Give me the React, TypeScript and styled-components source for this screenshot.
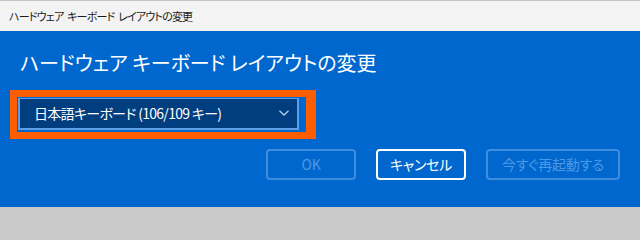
import React from "react";
import styled, { createGlobalStyle } from "styled-components";

const Global = createGlobalStyle`
  html, body {
    margin: 0;
    padding: 0;
    width: 640px;
    height: 210px;
    overflow: hidden;
    background: #c9c9c9;
  }
  body {
    font-family: "Noto Sans CJK JP", "Noto Sans", sans-serif;
    font-feature-settings: "palt";
  }
`;

const Window = styled.div`
  display: flex;
  flex-direction: column;
  width: 640px;
  height: 207px;
`;

const TitleBar = styled.div`
  display: flex;
  align-items: center;
  height: 30px;
  border-top: 1px solid #c4c4c4;
  background: #f3f3f3;
  padding-left: 9px;
  font-size: 11px;
  letter-spacing: -0.8px;
  word-spacing: 2px;
  color: #1b1b1b;
`;

const Content = styled.div`
  flex: 1;
  display: flex;
  flex-direction: column;
  background: #0067cf;
  padding: 18px 20px 0 10px;
`;

const Heading = styled.h1`
  margin: 0 0 0 10px;
  font-size: 20px;
  line-height: 28px;
  font-weight: 400;
  color: #ffffff;
`;

const FocusFrame = styled.div`
  align-self: flex-start;
  margin-top: 13px;
  border-style: solid;
  border-color: #ff5e00;
  border-width: 7px 10px 7px 7px;
  padding: 1px 7px 2px 1px;
`;

const Select = styled.div`
  display: flex;
  align-items: center;
  justify-content: space-between;
  box-sizing: border-box;
  width: 281px;
  height: 32px;
  background: #003e80;
  border-style: solid;
  border-color: #5c9fe6;
  border-width: 1px 2px 2px 2px;
  padding: 0 7px 1px 14px;
  font-size: 14px;
  letter-spacing: -0.7px;
  color: #ffffff;
`;

const Buttons = styled.div`
  display: flex;
  justify-content: flex-end;
  gap: 20px;
  margin-top: 10px;
`;

const Button = styled.div<{ $w: number; $enabled?: boolean }>`
  display: flex;
  align-items: center;
  justify-content: center;
  box-sizing: border-box;
  width: ${(p) => p.$w}px;
  height: 31px;
  border-radius: 4px;
  border: ${(p) => (p.$enabled ? "2px solid #ffffff" : "2px solid #3f8ddf")};
  color: ${(p) => (p.$enabled ? "#ffffff" : "#4e98e4")};
  font-size: 14px;
  letter-spacing: -0.3px;
  padding-bottom: 1px;
`;

const Chevron = () => (
  <svg width="12" height="8" viewBox="0 0 12 8">
    <path d="M1.5 1.8 L6 6 L10.5 1.8" fill="none" stroke="#b8cde6" strokeWidth="1.3" />
  </svg>
);

export default function App() {
  return (
    <>
      <Global />
      <Window>
        <TitleBar>ハードウェア キーボード レイアウトの変更</TitleBar>
        <Content>
          <Heading>ハードウェア キーボード レイアウトの変更</Heading>
          <FocusFrame>
            <Select>
              <span>日本語キーボード (106/109 キー)</span>
              <Chevron />
            </Select>
          </FocusFrame>
          <Buttons>
            <Button $w={90}>OK</Button>
            <Button $w={90} $enabled>
              キャンセル
            </Button>
            <Button $w={134}>今すぐ再起動する</Button>
          </Buttons>
        </Content>
      </Window>
    </>
  );
}
